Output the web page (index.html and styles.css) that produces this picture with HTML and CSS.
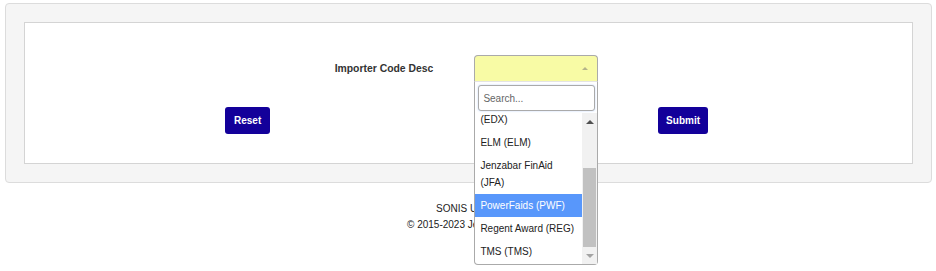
FILE: index.html
```html
<!DOCTYPE html>
<html lang="en">
  <head>
    <meta charset="UTF-8" />
    <meta name="viewport" content="width=device-width, initial-scale=1.0" />
    <title>Importer Code</title>

    <link rel="stylesheet" href="styles.css">
  </head>
  <body>
    <div class="page">
      <div class="well">
        <form class="panel">
          <div class="field-row">
            <label class="field-label">Importer Code Desc</label>

            <div class="select-box">
              <span class="select-arrow"></span>

              <!-- open dropdown -->
              <div class="dropdown">
                <input class="dropdown-search" type="text" placeholder="Search..." />
                <div class="results">
                  <div class="results-view">
                    <ul class="results-list">
                      <li>(EDX)</li>
                      <li>ELM (ELM)</li>
                      <li>Jenzabar FinAid (JFA)</li>
                      <li class="highlighted">PowerFaids (PWF)</li>
                      <li>Regent Award (REG)</li>
                      <li>TMS (TMS)</li>
                    </ul>
                  </div>
                  <div class="scrollbar">
                    <span class="sb-btn"><i class="sb-up"></i></span>
                    <span class="sb-track"><i class="sb-thumb"></i></span>
                    <span class="sb-btn"><i class="sb-down"></i></span>
                  </div>
                </div>
              </div>
            </div>
          </div>

          <div class="actions">
            <button type="reset" class="btn">Reset</button>
            <button type="submit" class="btn btn-submit">Submit</button>
          </div>
        </form>
      </div>

      <div class="footer">
        <p>SONIS Unified</p>
        <p>&copy; 2015-2023 Jenzabar, Inc.</p>
      </div>
    </div>
  </body>
</html>
```

FILE: styles.css
```css
body {
  font-family: "Liberation Sans", Arial, sans-serif;
  margin: 0;
  padding: 0;
  color: #333;
  background-color: white;
}

.page {
  min-height: 271px;
  box-sizing: border-box;
  padding: 3px 4px 0 5px;
}

/* Well */
.well {
  background-color: #f5f5f5;
  border: 1px solid #dcdcdc;
  border-radius: 4px;
  padding: 18px;
}

.panel {
  margin: 0;
  background-color: white;
  border: 1px solid #d4d4d4;
  padding: 32px 0 29px;
}

.field-row {
  display: flex;
  justify-content: center;
  align-items: center;
  gap: 41px;
  padding-right: 4px;
}

.field-label {
  font-size: 10.4px;
  font-weight: bold;
  color: #333;
}

/* Select */
.select-box {
  position: relative;
  width: 124px;
  height: 26px;
  box-sizing: border-box;
  background-color: #f8fba5;
  border: 1px solid #aaa;
  border-bottom: none;
  border-radius: 4px 4px 0 0;
}

.select-arrow {
  position: absolute;
  right: 9px;
  top: 11px;
  border-style: solid;
  border-width: 0 3px 3px 3px;
  border-color: transparent transparent #b4b48a transparent;
}

.dropdown {
  position: absolute;
  top: 25px;
  left: -1px;
  width: 124px;
  height: 184px;
  box-sizing: border-box;
  background-color: white;
  border: 1px solid #aaa;
  border-top: 1px solid #e4e4e4;
  border-radius: 0 0 4px 4px;
  display: flex;
  flex-direction: column;
  z-index: 10;
}

.dropdown-search {
  margin: 3px 2px 2px 3px;
  height: 26px;
  box-sizing: border-box;
  border: 1px solid #aaa;
  border-radius: 3px;
  padding: 3px 4px;
  font-family: inherit;
  font-size: 10px;
  box-shadow: 0 0 2px rgba(88, 151, 251, 0.4);
}

.dropdown-search::placeholder {
  color: #666;
}

.results {
  flex: 1;
  display: flex;
  overflow: hidden;
}

.results-view {
  flex: 1;
  overflow: hidden;
}

.results-list {
  list-style: none;
  margin: -5px 0 0;
  padding: 0;
}

.results-list li {
  font-size: 10px;
  line-height: 17px;
  padding: 3px 7px 3px 5px;
  color: #222;
}

.results-list li.highlighted {
  background-color: #5897fb;
  color: white;
}

/* Scrollbar */
.scrollbar {
  width: 15px;
  background-color: #f1f1f1;
  display: flex;
  flex-direction: column;
}

.sb-btn {
  height: 17px;
  display: flex;
  justify-content: center;
  align-items: center;
}

.sb-up {
  border-style: solid;
  border-width: 0 4px 4px 4px;
  border-color: transparent transparent #505050 transparent;
}

.sb-down {
  border-style: solid;
  border-width: 4px 4px 0 4px;
  border-color: #a3a3a3 transparent transparent transparent;
}

.sb-track {
  flex: 1;
  display: flex;
  flex-direction: column;
  justify-content: flex-end;
}

.sb-thumb {
  height: 79px;
  margin: 0 1px;
  background-color: #c1c1c1;
}

/* Buttons */
.actions {
  margin-top: 26px;
  display: flex;
  justify-content: space-between;
  padding: 0 204px 0 200px;
}

.btn {
  height: 27px;
  padding: 0 9px;
  background-color: #13009a;
  color: white;
  border: none;
  border-radius: 3px;
  font-family: inherit;
  font-size: 10px;
  font-weight: bold;
  cursor: pointer;
}

.btn-submit {
  padding: 0 8px;
}

/* Footer */
.footer {
  margin-top: 18px;
  text-align: center;
  font-size: 10px;
  color: #222;
}

.footer p {
  margin: 0;
  line-height: 16px;
}
```
